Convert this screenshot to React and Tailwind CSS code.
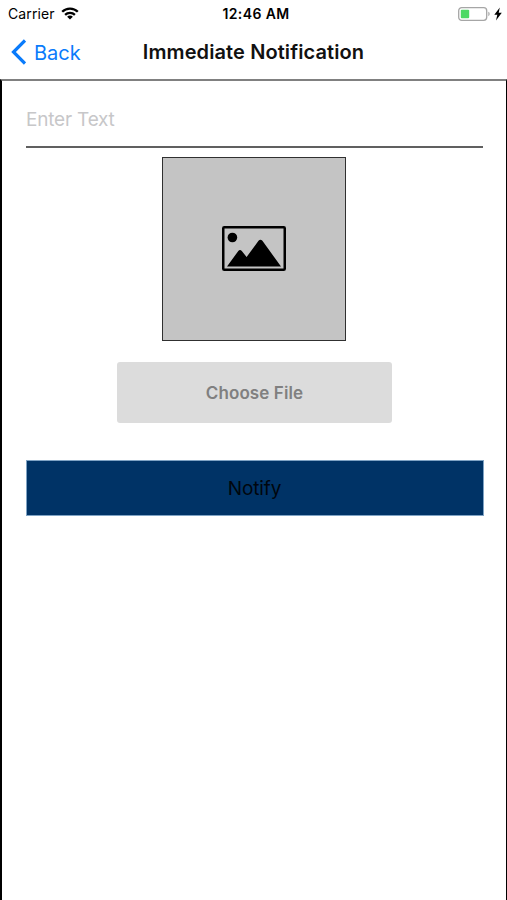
import { useState } from 'react'

export default function App() {
  const [text, setText] = useState('')

  return (
    <div className="flex h-[900px] w-[507px] flex-col overflow-hidden bg-white font-['Inter',sans-serif] text-black">
      <StatusBar />
      <NavBar title="Immediate Notification" />

      {/* ── Form ─────────────────────────────────────────────────────── */}
      <main className="flex flex-1 flex-col border-t-2 border-r border-l-2 border-t-[#808080] border-r-black border-l-black pr-[22px] pl-6">
        <input
          value={text}
          onChange={(e) => setText(e.target.value)}
          placeholder="Enter Text"
          className="h-[67px] w-[457px] border-b-2 border-[#606060] pt-[18px] pb-[7px] text-[19px] leading-[24px] tracking-[-0.2px] outline-none placeholder:text-[#c7c7c9]"
        />

        <div className="mt-[9px] ml-[136px] flex h-[184px] w-[184px] items-center justify-center border border-[#303030] bg-[#c4c4c4] pb-px">
          <PictureIcon />
        </div>

        <button className="mt-[21px] ml-[91px] h-[61px] w-[275px] rounded-[3px] bg-[#dcdcdc] pt-[2px] text-[17px] font-semibold tracking-[0.1px] text-[#808080]">
          Choose File
        </button>

        <button className="mt-[37px] h-[56px] w-[458px] border border-[#7fa3c4] bg-[#003366] pt-[3px] pr-px text-[19px] tracking-[-0.1px] text-[#00060d]">
          Notify
        </button>
      </main>
    </div>
  )
}

function StatusBar() {
  return (
    <div className="grid h-[27px] grid-cols-3 items-center pr-[5px] pl-[8px] text-[14px] leading-[27px]">
      <div className="flex items-center gap-[6px]">
        <span className="tracking-[0.1px]">Carrier</span>
        <WifiIcon />
      </div>
      <span className="pl-[2px] text-center font-semibold tracking-[0.4px]">12:46 AM</span>
      <div className="flex items-center justify-end gap-[4px]">
        <BatteryIcon />
        <svg width="8" height="14" viewBox="0 0 8 14">
          <path d="M5.8 0.5 0.3 7.7h3L2 13.5 7.8 5.8H4.7z" />
        </svg>
      </div>
    </div>
  )
}

function NavBar({ title }) {
  return (
    <header className="grid h-[52px] grid-cols-[1fr_auto_1fr] items-center pb-[2px]">
      <button className="flex items-center gap-[8px] pl-[11px] text-[20px] leading-[24px] text-[#0a7bfb]">
        <svg width="15" height="26" viewBox="0 0 15 26" fill="none" stroke="currentColor" strokeWidth="3.2">
          <path d="M14 1.5 2.5 13 14 24.5" />
        </svg>
        <span className="pt-[2px]">Back</span>
      </button>
      <h1 className="text-[20px] font-semibold tracking-[0.1px] whitespace-nowrap text-[#111]">{title}</h1>
    </header>
  )
}

function WifiIcon() {
  return (
    <svg width="18" height="13" viewBox="0 0 18 13" fill="none" stroke="#000" strokeWidth="2.3">
      <path d="M1.2 4.8C5.4 0.5 12.6 0.5 16.8 4.8" />
      <path d="M4.1 7.9c2.7-2.6 7.1-2.6 9.8 0" />
      <path d="M9 12.5 6.1 9.7c1.6-1.5 4.2-1.5 5.8 0z" fill="#000" stroke="none" />
    </svg>
  )
}

function BatteryIcon() {
  return (
    <svg width="32" height="14" viewBox="0 0 32 14">
      <rect x="0.7" y="0.7" width="28" height="12.6" rx="3" fill="none" stroke="#a6a6a6" strokeWidth="1.3" />
      <rect x="2.8" y="2.7" width="8.4" height="8.6" rx="1" fill="#4cd964" />
      <path d="M30.3 4.8c1.8 0.6 1.8 3.8 0 4.4z" fill="#a6a6a6" />
    </svg>
  )
}

function PictureIcon() {
  return (
    <svg width="64" height="45" viewBox="0 0 64 45">
      <rect x="1.25" y="1.25" width="61.5" height="42.5" rx="1" fill="none" stroke="#000" strokeWidth="2.5" />
      <circle cx="10.4" cy="11.5" r="4.8" />
      <path d="M5 40.5 16.3 25Q18 23 19.8 25L24.6 31 36.5 14.8Q38.5 12.7 40.4 14.8L59 40.5z" />
    </svg>
  )
}
